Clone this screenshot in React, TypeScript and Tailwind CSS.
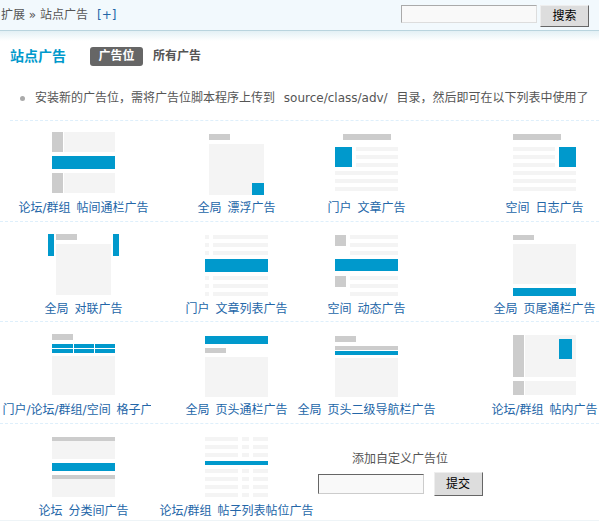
import React from 'react';

type R = [number, number, number, number, string];

const G = '#cccccc';
const L = '#f4f4f4';
const B = '#0099cc';

const lines = (x: number, w: number, ys: number[]): R[] => ys.map(y => [x, y, w, 4, L] as R);

const listRows = (): R[] => {
  const out: R[] = [];
  for (let i = 0; i < 8; i++) {
    const y = i * 8;
    if (i === 3) {
      out.push([4, y, 63, 4, B]);
    } else {
      out.push([4, y, 33, 4, L], [41, y, 7, 4, L], [52, y, 15, 4, L]);
    }
  }
  return out;
};

const thumbs: Record<string, R[]> = {
  thread: [[4, 0, 11, 20, G], [16, 0, 51, 20, L], [4, 24, 63, 13, B], [4, 41, 11, 20, G], [16, 41, 51, 20, L]],
  float: [[8, 2, 21, 6, G], [8, 12, 55, 51, L], [51, 51, 12, 12, B]],
  article: [[12, 2, 48, 6, G], [4, 15, 17, 20, B], ...lines(25, 42, [15, 23, 31]), ...lines(4, 63, [39, 47, 55])],
  blog: [[4, 2, 48, 6, G], ...lines(4, 42, [15, 23, 31]), [50, 15, 17, 20, B], ...lines(4, 63, [39, 47, 55])],
  couplet: [[0, 0, 6, 22, B], [8, 0, 21, 6, G], [8, 10, 55, 51, L], [65, 0, 6, 22, B]],
  articlelist: [
    ...lines(4, 4, [1, 9, 17]), ...lines(12, 55, [1, 9, 17]),
    [4, 25, 63, 13, B],
    ...lines(4, 4, [42, 50, 58]), ...lines(12, 55, [42, 50, 58]),
  ],
  feed: [
    [4, 1, 11, 11, G], ...lines(19, 48, [1, 9, 17]),
    [4, 25, 63, 12, B],
    [4, 42, 11, 11, G], ...lines(19, 48, [42, 50, 58]),
  ],
  footer: [[4, 1, 21, 5, G], [4, 10, 63, 40, L], [4, 54, 63, 8, B]],
  grid: [
    [4, 0, 21, 6, G],
    [4, 10, 21, 4, B], [26, 10, 20, 4, B], [47, 10, 20, 4, B],
    [4, 15, 21, 4, B], [26, 15, 20, 4, B], [47, 15, 20, 4, B],
    [4, 22, 63, 39, L],
  ],
  header: [[4, 2, 63, 8, B], [4, 14, 21, 5, G], [4, 23, 63, 40, L]],
  subnav: [[4, 2, 21, 6, G], [4, 12, 63, 4, G], [4, 17, 63, 4, B], [4, 24, 63, 39, L]],
  inthread: [[4, 1, 11, 42, G], [16, 1, 51, 42, L], [50, 5, 13, 20, B], [4, 47, 11, 14, G], [16, 47, 51, 14, L]],
  interforum: [[4, 0, 63, 4, G], [4, 4, 63, 18, L], [4, 26, 63, 8, B], [4, 38, 63, 4, G], [4, 42, 63, 18, L]],
  threadlist: listRows(),
};

const Thumb = ({ name }: { name: string }) => (
  <svg width="71" height="64" viewBox="0 0 71 64" className="block shrink-0">
    {thumbs[name].map(([x, y, w, h, c], i) => (
      <rect key={i} x={x} y={y} width={w} height={h} fill={c} />
    ))}
  </svg>
);

const colClass = ['w-[167px]', 'w-[139px]', 'w-[121px]', 'ml-[63px] w-[109px]'];

interface Item {
  thumb: string;
  label: string;
  clip?: boolean;
}

const rows: { pt: string; mt: string; h: string; items: Item[] }[] = [
  {
    pt: 'pt-[11px]', mt: 'mt-[4px]', h: 'h-[101px]',
    items: [
      { thumb: 'thread', label: '论坛/群组 帖间通栏广告' },
      { thumb: 'float', label: '全局 漂浮广告' },
      { thumb: 'article', label: '门户 文章广告' },
      { thumb: 'blog', label: '空间 日志广告' },
    ],
  },
  {
    pt: 'pt-[12px]', mt: 'mt-[3px]', h: 'h-[100px]',
    items: [
      { thumb: 'couplet', label: '全局 对联广告' },
      { thumb: 'articlelist', label: '门户 文章列表广告' },
      { thumb: 'feed', label: '空间 动态广告' },
      { thumb: 'footer', label: '全局 页尾通栏广告' },
    ],
  },
  {
    pt: 'pt-[12px]', mt: 'mt-[4px]', h: 'h-[102px]',
    items: [
      { thumb: 'grid', label: '门户/论坛/群组/空间 格子广告', clip: true },
      { thumb: 'header', label: '全局 页头通栏广告' },
      { thumb: 'subnav', label: '全局 页头二级导航栏广告' },
      { thumb: 'inthread', label: '论坛/群组 帖内广告' },
    ],
  },
];

const font = { fontFamily: '"DejaVu Sans", "Noto Sans CJK SC", sans-serif' };

const Cell = ({ item, col, mt }: { item: Item; col: number; mt: string }) => (
  <div className={`${colClass[col]} shrink-0 flex flex-col items-center`}>
    <Thumb name={item.thumb} />
    {item.clip ? (
      <div className={`${mt} w-[162px] shrink-0`}>
        <div className="w-[148px] overflow-hidden whitespace-nowrap leading-4 text-[#2366a8] [word-spacing:2px]">{item.label}</div>
      </div>
    ) : (
      <div className={`${mt} shrink-0 whitespace-nowrap leading-4 text-[#2366a8] [word-spacing:2px]`}>{item.label}</div>
    )}
  </div>
);

export default function App() {
  return (
    <div className="w-[599px] h-[522px] overflow-hidden bg-white text-[12px] text-[#555]" style={font}>
      <div className="h-[30px] bg-[#f2f9fd] flex justify-between pl-[1px] pr-[10px]">
        <div className="pt-[7px] leading-4 text-[#555]">
          扩展 » 站点广告<span className="ml-[9px] text-[#2366a8]">[+]</span>
        </div>
        <div className="flex items-start gap-[3px] pt-[5px]">
          <input className="w-[136px] h-[18px] bg-[#f9f9f9] border border-t-[#aaa] border-l-[#aaa] border-r-[#ddd] border-b-[#ddd] outline-none" />
          <button className="w-[49px] h-[22px] bg-[#dddddd] border border-t-[#eee] border-l-[#eee] border-r-[#666] border-b-[#666] text-black leading-4">
            搜索
          </button>
        </div>
      </div>
      <div className="h-px bg-[#b9d4de]" />
      <div className="h-[10px] bg-gradient-to-b from-[#e3f0f5] to-white" />

      <div className="mt-[4px] h-[22px] flex items-center">
        <div className="ml-[10px] w-[80px] text-[14px] font-bold text-[#0099cc] leading-[18px]">站点广告</div>
        <div className="w-[53px] h-[19px] rounded-[3px] bg-[#666] text-white font-bold text-center leading-[19px]">广告位</div>
        <div className="ml-[10px] font-bold text-[#555]">所有广告</div>
      </div>

      <div className="ml-[10px] pt-[23px] pb-[14px] border-b border-dashed border-[#deeffb]">
        <div className="pl-[10px] flex items-center h-4">
          <span className="w-[5px] h-[5px] rounded-full bg-[#aaa] shrink-0" />
          <span className="ml-[10px] whitespace-nowrap leading-4 text-[#555] [word-spacing:5px]">
            安装新的广告位，需将广告位脚本程序上传到 source/class/adv/ 目录，然后即可在以下列表中使用了
          </span>
        </div>
      </div>

      {rows.map((row, ri) => (
        <div key={ri} className={`${row.h} ${row.pt} flex border-b border-dashed border-[#deeffb]`}>
          {row.items.map((item, ci) => (
            <Cell key={ci} item={item} col={ci} mt={row.mt} />
          ))}
        </div>
      ))}

      <div className="h-[97px] pt-[13px] flex border-b border-[#eef4f7]">
        <Cell item={{ thumb: 'interforum', label: '论坛 分类间广告' }} col={0} mt="mt-[2px]" />
        <Cell item={{ thumb: 'threadlist', label: '论坛/群组 帖子列表帖位广告' }} col={1} mt="mt-[2px]" />
        <div className="w-[188px] shrink-0 flex flex-col items-center pt-[14px]">
          <div className="leading-4 text-[#555]">添加自定义广告位</div>
          <div className="mt-[5px] flex items-center gap-[10px]">
            <input className="w-[106px] h-[20px] bg-[#f9f9f9] border border-t-[#666] border-l-[#666] border-r-[#ccc] border-b-[#ccc] outline-none" />
            <button className="w-[49px] h-[24px] bg-[#dddddd] border border-t-[#eee] border-l-[#eee] border-r-[#666] border-b-[#666] text-black leading-4">
              提交
            </button>
          </div>
        </div>
      </div>
    </div>
  );
}
